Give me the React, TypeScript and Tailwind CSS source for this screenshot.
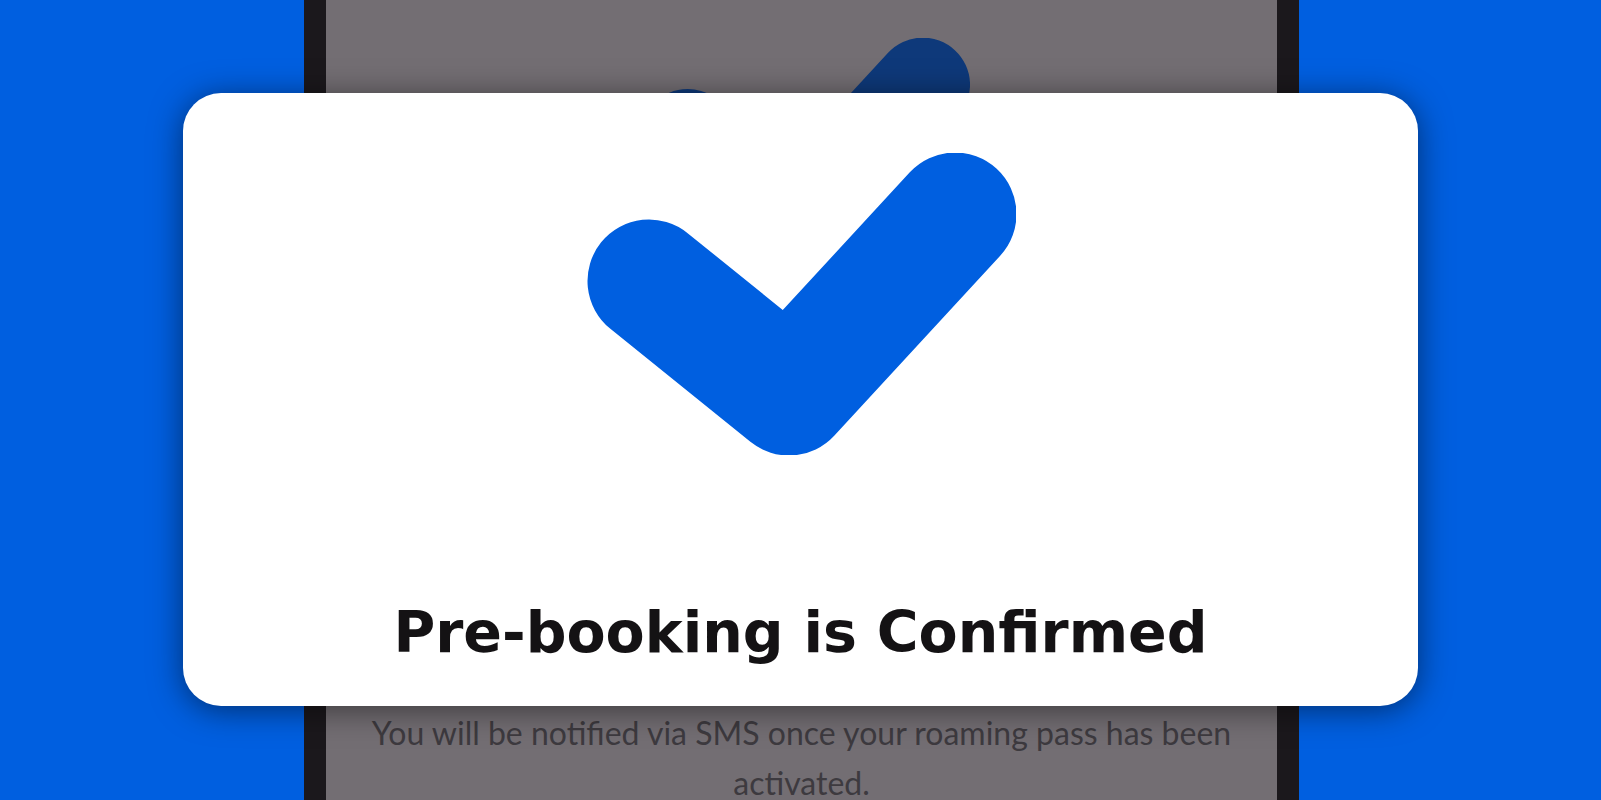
const Check = ({ className, color }: { className: string; color: string }) => (
	<svg viewBox="0 0 430 302" className={className}>
		<path
			d="M63 128 L203 241 L369 61"
			fill="none"
			stroke={color}
			strokeWidth="123"
			strokeLinecap="round"
			strokeLinejoin="round"
		/>
	</svg>
);

const App = () => {
	return (
		<div className="relative h-[800px] w-[1601px] overflow-hidden bg-[#005fe0]">
			<div className="flex h-full justify-center">
				{/* phone behind the modal */}
				<div className="ml-[2px] h-[900px] w-[995px] bg-[#1b181c] px-[22px]">
					<div className="flex h-full flex-col items-center bg-[#736e73]">
						<Check className="mt-[38px] h-[232px] w-[331px] translate-x-[3px]" color="#0e397a" />
						<p
							className="mt-[438px] px-[30px] text-center text-[32px] leading-[50px] text-[#3d3a3f]"
							style={{ fontFamily: 'Lato, "Open Sans", sans-serif' }}
						>
							You will be notified via SMS once your roaming pass has been activated.
						</p>
					</div>
				</div>
			</div>

			{/* confirmation modal */}
			<div className="absolute left-[183px] top-[93px] flex h-[613px] w-[1235px] flex-col items-center rounded-[38px] bg-white pt-[60px] shadow-[0_4px_32px_rgba(0,0,0,0.5)]">
				<Check className="h-[302px] w-[430px]" color="#005fe0" />
				<h1
					className="mt-[149px] text-[57px] font-bold leading-none text-[#141214]"
					style={{ fontFamily: '"DejaVu Sans", Inter, sans-serif' }}
				>
					Pre-booking is Confirmed
				</h1>
			</div>
		</div>
	);
};

export default App;
